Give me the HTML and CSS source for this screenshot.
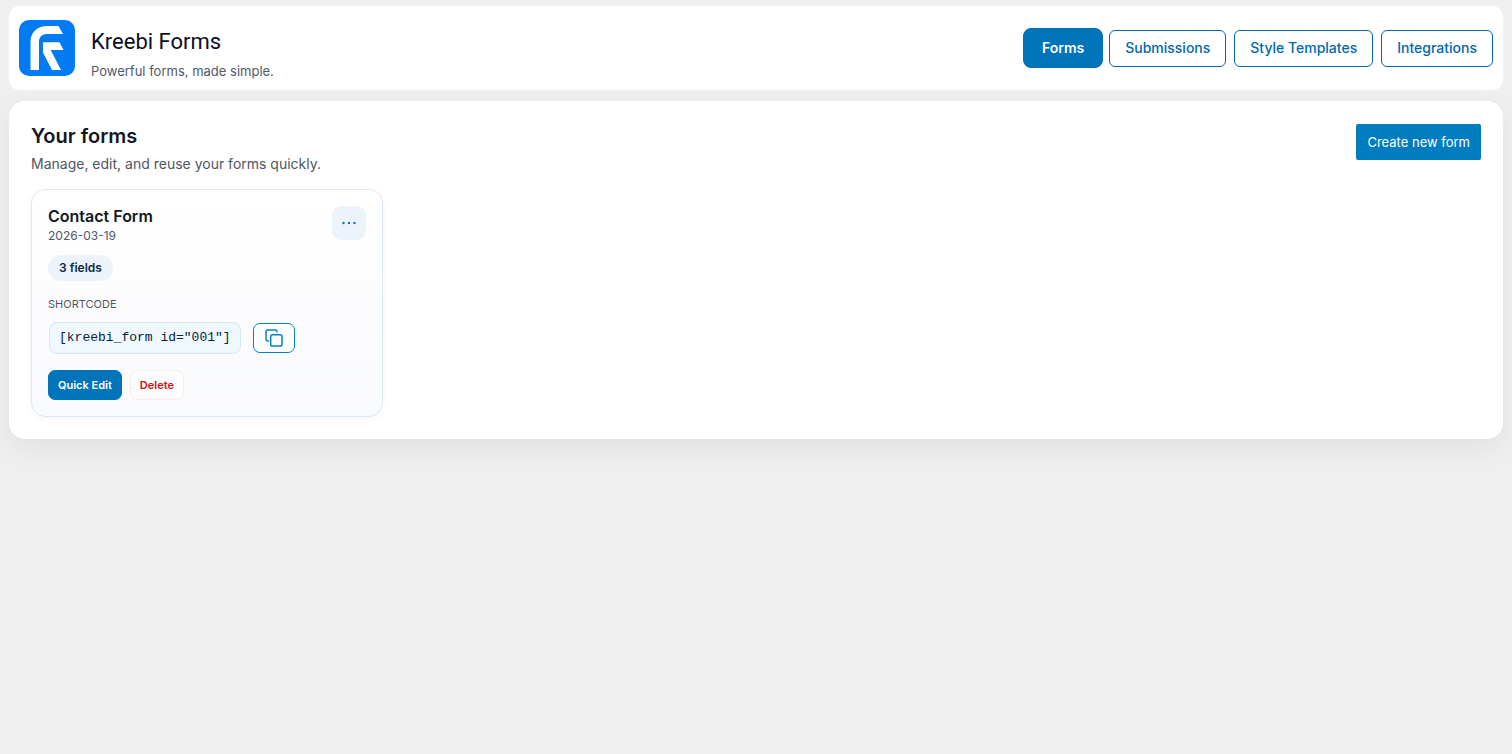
FILE: index.html
```html
<!DOCTYPE html>
<html lang="en">
<head>
<meta charset="utf-8">
<meta name="viewport" content="width=device-width, initial-scale=1">
<title>Kreebi Forms</title>
<link rel="stylesheet" href="styles.css">
</head>
<body>
<header class="topbar">
  <svg class="logo" viewBox="0 0 56 56" role="img" aria-label="Kreebi">
    <rect width="56" height="56" rx="10" fill="#007bf4"/>
    <path fill="#fff" d="M11.500 50V22C11.500 12 18.500 6 28 6H39.500L44 14H28C23 14 20 17 20 22V50ZM24 22.300H40.500L44.500 30H31.700L42 50H33L24 32.500Z"/>
  </svg>
  <div class="brand">
    <h1 class="brand-name">Kreebi Forms</h1>
    <p class="tagline">Powerful forms, made simple.</p>
  </div>
  <nav class="tabs">
    <button type="button" class="tab tab-active">Forms</button>
    <button type="button" class="tab">Submissions</button>
    <button type="button" class="tab">Style Templates</button>
    <button type="button" class="tab">Integrations</button>
  </nav>
</header>
<main class="panel">
  <div class="panel-head">
    <div>
      <h2 class="panel-title">Your forms</h2>
      <p class="panel-text">Manage, edit, and reuse your forms quickly.</p>
    </div>
    <button type="button" class="create">Create new form</button>
  </div>
  <div class="grid">
    <article class="card">
      <div class="card-head">
        <div>
          <h3 class="card-title">Contact Form</h3>
          <p class="date">2026-03-19</p>
        </div>
        <button type="button" class="more" aria-label="More actions">
          <svg width="16" height="4" viewBox="0 0 16 4" fill="currentColor"><circle cx="2.500" cy="2" r="1.200"/><circle cx="8" cy="2" r="1.200"/><circle cx="13.500" cy="2" r="1.200"/></svg>
        </button>
      </div>
      <span class="badge">3 fields</span>
      <p class="label">SHORTCODE</p>
      <div class="shortcode">
        <code class="code">[kreebi_form id="001"]</code>
        <button type="button" class="copy" aria-label="Copy shortcode">
          <svg width="18" height="18" viewBox="0 0 18 18" fill="none" stroke="currentColor" stroke-width="1.500" stroke-linejoin="round" stroke-linecap="round"><rect x="5.700" y="5.700" width="11.300" height="11.300" rx="1.800"/><path d="M3.500 12H2.700A1.700 1.700 0 0 1 1 10.300V2.700A1.700 1.700 0 0 1 2.700 1H10.300A1.700 1.700 0 0 1 12 2.700V3"/></svg>
        </button>
      </div>
      <div class="actions">
        <button type="button" class="action action-edit">Quick Edit</button>
        <button type="button" class="action action-delete">Delete</button>
      </div>
    </article>
  </div>
</main>
</body>
</html>
```
FILE: styles.css
```css
* { box-sizing: border-box; }
body {
  margin: 0;
  min-height: 100vh;
  padding: 6px 9px;
  background: #efefef;
  color: #111820;
  font-family: Inter, "Liberation Sans", sans-serif;
}
h1, h2, h3, p { margin: 0; }
button { font: inherit; cursor: pointer; }
svg { display: block; }

.topbar {
  display: flex;
  align-items: center;
  gap: 16px;
  padding: 10px;
  background: #fff;
  border-radius: 10px;
}
.logo { width: 56px; height: 56px; flex: none; }
.brand { flex: 1; padding-top: 6px; }
.brand-name {
  font-family: Roboto, Inter, sans-serif;
  font-size: 22px;
  font-weight: 400;
  line-height: 40px;
  color: #0b1020;
}
.tagline { font-size: 13px; line-height: 18px; color: #50596b; }

.tabs { display: flex; align-items: center; gap: 8px; }
.tab {
  height: 37px;
  padding: 0 15px 1px;
  border: 1px solid #0068ab;
  border-radius: 6px;
  background: #fff;
  color: #0068ab;
  font-size: 14px;
  font-weight: 500;
}
.tab-active {
  height: 40px;
  margin-right: -2px;
  padding: 0 18px 1px;
  border-radius: 8px;
  border-color: #0073b9;
  background: #0073b9;
  color: #fff;
  font-weight: 600;
}

.panel {
  margin-top: 11px;
  padding: 22px;
  background: #fff;
  border-radius: 16px;
  box-shadow: 0 10px 28px rgba(15, 23, 42, 0.06);
}
.panel-head { display: flex; justify-content: space-between; align-items: flex-start; }
.panel-title { font-size: 20px; font-weight: 600; line-height: 26px; }
.panel-text { margin-top: 5px; font-size: 14px; line-height: 20px; color: #4e5663; }
.create {
  height: 36px;
  margin-top: 1px;
  padding: 0 11px;
  border: 0;
  border-radius: 2px;
  background: #007dc0;
  color: #fff;
  font-size: 13px;
}

.grid {
  display: grid;
  grid-template-columns: repeat(auto-fill, minmax(340px, 1fr));
  gap: 14px;
  margin-top: 15px;
}
.card {
  padding: 16px;
  border: 1px solid #dbe7f3;
  border-radius: 14px;
  background: linear-gradient(#fff, #f9fafd);
  box-shadow: 0 2px 6px rgba(15, 23, 42, 0.04);
}
.card-head { display: flex; justify-content: space-between; align-items: flex-start; }
.card-title { font-size: 16px; font-weight: 600; line-height: 21px; }
.date { font-size: 12px; line-height: 18px; color: #50586a; }
.more {
  display: grid;
  place-items: center;
  width: 34px;
  height: 34px;
  padding: 0;
  border: 0;
  border-radius: 9px;
  background: #edf3fb;
  color: #0073b9;
}
.badge {
  display: block;
  width: fit-content;
  margin-top: 10px;
  padding: 0 11px;
  border-radius: 13px;
  background: #edf3fb;
  color: #0b2b45;
  font-size: 12px;
  font-weight: 600;
  line-height: 26px;
}
.label { margin-top: 14px; font-size: 11px; line-height: 18px; color: #50555f; }
.shortcode { display: flex; align-items: center; gap: 12px; margin: 9px 0 0 1px; }
.code {
  padding: 0 9px;
  border: 1px solid #d5e7f5;
  border-radius: 8px;
  background: #eff8ff;
  color: #06233a;
  font-family: "Liberation Mono", monospace;
  font-size: 13px;
  line-height: 30px;
}
.copy {
  display: grid;
  place-items: center;
  width: 42px;
  height: 30px;
  padding: 0;
  border: 1px solid #0082c4;
  border-radius: 7px;
  background: #fff;
  color: #0082c4;
}
.actions { display: flex; gap: 8px; margin-top: 16px; }
.action {
  height: 30px;
  padding: 0 9px 1px;
  border: 1px solid #0073b9;
  border-radius: 7px;
  font-size: 11px;
  font-weight: 600;
}
.action-edit { background: #0073b9; color: #fff; }
.action-delete { border-color: #fbeaec; background: #fdfcfd; color: #d60a12; }
```
